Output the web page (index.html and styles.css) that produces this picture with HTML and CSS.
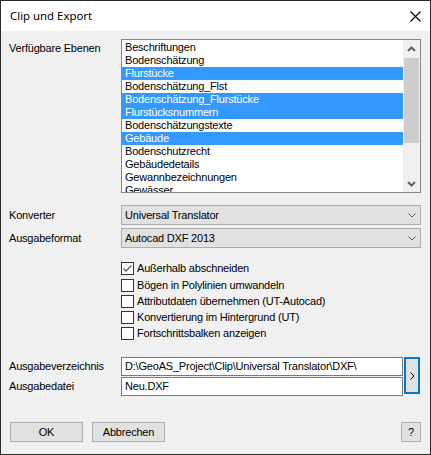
FILE: index.html
```html
<!DOCTYPE html>
<html lang="de">
<head>
<meta charset="utf-8">
<title>Clip und Export</title>
<link rel="stylesheet" href="styles.css">
</head>
<body>
<div class="window">
  <div class="titlebar">
    <span class="title">Clip und Export</span>
    <svg class="close" width="11" height="11" viewBox="0 0 11 11"><path d="M0.5 0.5 L10.5 10.5 M10.5 0.5 L0.5 10.5" stroke="#000" stroke-width="1.1" fill="none"/></svg>
  </div>
  <div class="content">
    <div class="field-row listbox-row">
      <div class="label">Verfügbare Ebenen</div>
      <div class="listbox">
        <div class="items">
          <div class="item">Beschriftungen</div>
          <div class="item">Bodenschätzung</div>
          <div class="item sel">Flurstücke</div>
          <div class="item">Bodenschätzung_Flst</div>
          <div class="item sel">Bodenschätzung_Flurstücke</div>
          <div class="item sel">Flurstücksnummern</div>
          <div class="item">Bodenschätzungstexte</div>
          <div class="item sel">Gebäude</div>
          <div class="item">Bodenschutzrecht</div>
          <div class="item">Gebäudedetails</div>
          <div class="item">Gewannbezeichnungen</div>
          <div class="item">Gewässer</div>
        </div>
        <div class="scrollbar">
          <div class="sb-btn"><svg width="9" height="6" viewBox="0 0 9 6"><path d="M1 5 L4.5 1.5 L8 5" stroke="#606060" stroke-width="2" fill="none"/></svg></div>
          <div class="thumb"></div>
          <div class="sb-space"></div>
          <div class="sb-btn"><svg width="9" height="6" viewBox="0 0 9 6"><path d="M1 1 L4.5 4.5 L8 1" stroke="#606060" stroke-width="2" fill="none"/></svg></div>
        </div>
      </div>
    </div>

    <div class="field-row combo-row">
      <div class="label">Konverter</div>
      <div class="combo"><span>Universal Translator</span><svg width="8" height="5" viewBox="0 0 8 5"><path d="M0.5 0.5 L4 4 L7.5 0.5" stroke="#606060" stroke-width="1" fill="none"/></svg></div>
    </div>
    <div class="field-row combo-row second">
      <div class="label">Ausgabeformat</div>
      <div class="combo"><span>Autocad DXF 2013</span><svg width="8" height="5" viewBox="0 0 8 5"><path d="M0.5 0.5 L4 4 L7.5 0.5" stroke="#606060" stroke-width="1" fill="none"/></svg></div>
    </div>

    <div class="checks">
      <div class="check"><span class="box"><svg width="11" height="11" viewBox="0 0 11 11"><path d="M1.5 5.5 L4 8 L9.5 2.5" stroke="#5a5a5a" stroke-width="1.3" fill="none"/></svg></span>Außerhalb abschneiden</div>
      <div class="check"><span class="box"></span>Bögen in Polylinien umwandeln</div>
      <div class="check"><span class="box"></span>Attributdaten übernehmen (UT-Autocad)</div>
      <div class="check"><span class="box"></span>Konvertierung im Hintergrund (UT)</div>
      <div class="check"><span class="box"></span>Fortschrittsbalken anzeigen</div>
    </div>

    <div class="output">
      <div class="out-labels">
        <div class="out-label">Ausgabeverzeichnis</div>
        <div class="out-label second">Ausgabedatei</div>
      </div>
      <div class="inputs">
        <div class="textbox">D:\GeoAS_Project\Clip\Universal Translator\DXF\</div>
        <div class="textbox second">Neu.DXF</div>
      </div>
      <div class="browse"><svg width="5" height="8" viewBox="0 0 5 8"><path d="M0.5 0.5 L4 4 L0.5 7.5" stroke="#000" stroke-width="1" fill="none"/></svg></div>
    </div>

    <div class="buttons">
      <div class="btn ok">OK</div>
      <div class="btn cancel">Abbrechen</div>
      <div class="btn help">?</div>
    </div>
  </div>
</div>
</body>
</html>
```
FILE: styles.css
```css
* { box-sizing: border-box; }
html, body { margin: 0; padding: 0; background: #fff; }
body {
  font-family: "Liberation Sans", Arial, sans-serif;
  font-size: 11px;
  line-height: 13px;
  letter-spacing: -0.2px;
  color: #000;
}
.window {
  width: 431px;
  height: 455px;
  border: 1px solid #2b2b2b;
  background: #f0f0f0;
  display: flex;
  flex-direction: column;
}
.titlebar {
  height: 30px;
  flex: none;
  background: #fff;
  display: flex;
  align-items: center;
  justify-content: space-between;
  padding: 0 9px 0 9px;
}
.title {
  font-family: "Noto Sans", sans-serif;
  font-size: 11.4px;
  line-height: 16px;
  letter-spacing: 0;
}
.close { display: block; }
.content {
  padding: 8px 9px 0 8px;
  display: flex;
  flex-direction: column;
}
.field-row { display: flex; align-items: center; }
.label { width: 112px; flex: none; }
.listbox-row { align-items: flex-start; }
.listbox-row .label { padding-top: 3px; }
.listbox {
  width: 300px;
  height: 154px;
  border: 1px solid #828790;
  background: #fff;
  display: flex;
}
.items {
  flex: 1;
  padding-top: 1px;
  overflow: hidden;
}
.item {
  height: 13px;
  line-height: 13px;
  padding-left: 3px;
  white-space: nowrap;
}
.item.sel { background: #3399ff; color: #fff; }
.scrollbar {
  width: 17px;
  flex: none;
  background: #f0f0f0;
  display: flex;
  flex-direction: column;
}
.sb-btn {
  height: 17px;
  display: flex;
  align-items: center;
  justify-content: center;
}
.thumb {
  margin: 1px 0 0 1px;
  width: 15px;
  height: 85px;
  background: #cdcdcd;
}
.sb-space { flex: 1; }
.combo-row { margin-top: 12px; }
.combo-row.second { margin-top: 3px; }
.combo {
  width: 300px;
  height: 20px;
  background: #e1e1e1;
  border: 1px solid #adadad;
  display: flex;
  align-items: center;
  justify-content: space-between;
  padding: 0 4px 0 3px;
}
.checks {
  margin-top: 12.75px;
  margin-left: 112px;
  display: flex;
  flex-direction: column;
}
.check {
  height: 16.25px;
  display: flex;
  align-items: center;
  white-space: nowrap;
}
.box {
  width: 13px;
  height: 13px;
  border: 1px solid #333;
  background: #fff;
  margin-right: 3px;
  display: flex;
  align-items: center;
  justify-content: center;
}
.output {
  margin-top: 15px;
  display: flex;
}
.out-labels { width: 112px; flex: none; }
.out-label { height: 19px; display: flex; align-items: center; }
.out-label.second { margin-top: 1px; }
.inputs { width: 282px; }
.textbox {
  height: 19px;
  border: 1px solid #7a7a7a;
  background: #fff;
  padding-left: 3px;
  display: flex;
  align-items: center;
  white-space: nowrap;
}
.textbox.second { margin-top: 1px; }
.browse {
  margin-left: 1px;
  width: 16px;
  height: 37px;
  border: 2px solid #0078d7;
  background: #e1e1e1;
  display: flex;
  align-items: center;
  justify-content: center;
}
.buttons {
  margin-top: 26px;
  display: flex;
}
.btn {
  height: 20px;
  background: #e1e1e1;
  border: 1px solid #adadad;
  display: flex;
  align-items: center;
  justify-content: center;
}
.ok { width: 73px; margin-left: 1px; }
.cancel { width: 73px; margin-left: 9px; }
.help { width: 20px; margin-left: auto; }
```
